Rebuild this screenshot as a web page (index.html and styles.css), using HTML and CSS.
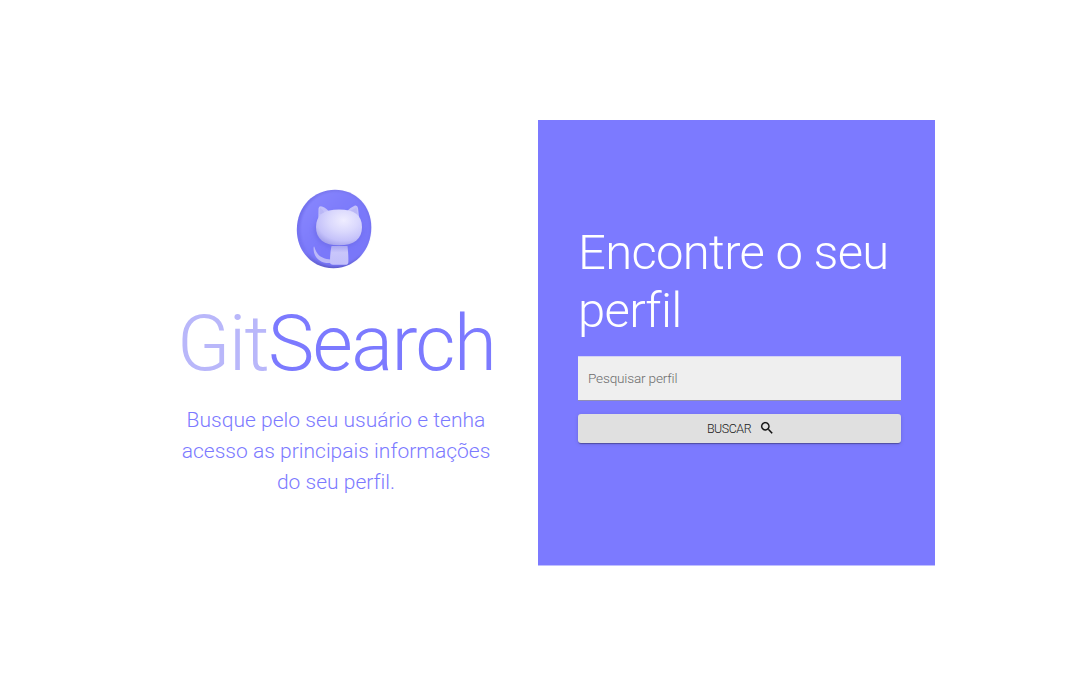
FILE: index.html
```html
<!DOCTYPE html>
<html lang="pt-BR">
<head>
<meta charset="utf-8">
<title>GitSearch</title>
<link rel="stylesheet" href="styles.css">
</head>
<body>
<main class="page">
  <section class="intro">
    <svg class="logo" width="76" height="80" viewBox="0 0 76 80" aria-hidden="true">
      <defs>
        <linearGradient id="disc" x1="0" y1="0" x2="1" y2="1">
          <stop offset="0" stop-color="#8a89ff"/><stop offset=".5" stop-color="#7b79fa"/><stop offset="1" stop-color="#7876f8"/>
        </linearGradient>
        <linearGradient id="rim" x1="0" y1="0" x2="0" y2="1">
          <stop offset="0" stop-color="#7a78ee"/><stop offset=".25" stop-color="#7270ee"/><stop offset=".8" stop-color="#7775f4"/><stop offset="1" stop-color="#5e5ccb"/>
        </linearGradient>
        <radialGradient id="head" cx=".6" cy=".3" r=".72">
          <stop offset="0" stop-color="#efedff"/><stop offset=".45" stop-color="#dad8fd"/><stop offset=".8" stop-color="#c5c2fa"/><stop offset="1" stop-color="#a8a5ee"/>
        </radialGradient>
        <linearGradient id="body" x1="0" y1="0" x2="0" y2="1">
          <stop offset="0" stop-color="#aaa7f2"/><stop offset=".35" stop-color="#c9c6fb"/><stop offset="1" stop-color="#c2bffa"/>
        </linearGradient>
        <filter id="soft" x="-30%" y="-30%" width="160%" height="160%"><feGaussianBlur stdDeviation="2"/></filter>
        <filter id="edge"><feGaussianBlur stdDeviation=".8"/></filter>
      </defs>
      <path d="M39 .8C60 .8 75.300 17 75.300 38.500C75.300 61 59 79.300 37.500 79.300C16 79.300 .8 62 .8 41C.8 17 18 .8 39 .8Z" fill="url(#rim)"/>
      <path d="M40 2.500C60 2.500 74 18 74 38.500C74 60 59 77 39 77C19 77 4.300 60 4.300 40C4.300 18 20 2.500 40 2.500Z" fill="url(#disc)" filter="url(#edge)"/>
      <ellipse cx="42" cy="41" rx="24" ry="18" fill="#6563df" opacity=".5" filter="url(#soft)"/>
      <path d="M18.300 57.800C20.500 65.500 25 70 35 70.500V74C24 75 17 68 17.600 58.500Q17.800 57 18.300 57.800Z" fill="#bcb9f8"/>
      <path d="M35.500 57H51.500Q52.600 66 52.300 73.500Q52.200 75.800 49 75.800H37Q34 75.800 34 73Q34 64 35.500 57Z" fill="url(#body)"/>
      <path d="M22.300 31L22.500 19.500Q23 16.500 26 17.500Q31 19 34 24ZM50 23Q54 18.500 59 16.500Q61.500 15.900 62 19L63.200 29Z" fill="#c3c0fa"/>
      <path d="M29 24.500Q27 20.500 24.200 18.700Q23.300 21 23.500 25ZM53 23.500Q57 20 60.500 18.500L61.300 25Z" fill="#aaa7ee" opacity=".35"/>
      <path d="M43 20.500C58 20.500 66 26 66 38C66 50 58 56.300 43 56.300C28 56.300 20 50 20 38C20 26 28 20.500 43 20.500Z" fill="url(#head)"/>
    </svg>
    <h1 class="brand"><span class="brand-light">Git</span>Search</h1>
    <p class="tagline">Busque pelo seu usuário e tenha acesso as principais informações do seu perfil.</p>
  </section>
  <section class="panel">
    <h2 class="heading">Encontre o seu perfil</h2>
    <input class="field" type="text" placeholder="Pesquisar perfil">
    <button class="submit" type="button">
      <span>BUSCAR</span>
      <svg class="search" viewBox="0 0 24 24" aria-hidden="true"><path d="M15.500 14h-.79l-.28-.27C15.410 12.590 16 11.110 16 9.500 16 5.910 13.090 3 9.500 3S3 5.910 3 9.500 5.910 16 9.500 16c1.610 0 3.090-.59 4.230-1.570l.27.28v.79l5 4.990L20.490 19l-4.990-5zm-6 0C7.010 14 5 11.990 5 9.500S7.010 5 9.500 5 14 7.010 14 9.500 11.990 14 9.500 14z"/></svg>
    </button>
  </section>
</main>
</body>
</html>
```
FILE: styles.css
```css
* { box-sizing: border-box; }
body {
  margin: 0;
  background: #fff;
  font-family: Roboto, "Liberation Sans", sans-serif;
  font-weight: 300;
}
.page {
  display: grid;
  grid-template-columns: 397px 397px;
  width: 794px;
  height: 446px;
  margin: 120px 0 0 141px;
}
.intro {
  display: flex;
  flex-direction: column;
  align-items: center;
  padding: 69px 43px 0 36px;
  color: #7c7aff;
}
.logo { flex: none; margin-right: 4px; }
.brand {
  margin: 29px 0 0;
  font-size: 78px;
  line-height: 91px;
  font-weight: 300;
  letter-spacing: -1.65px;
  white-space: nowrap;
}
.brand-light { color: #b9b7fa; }
.tagline {
  width: 318px;
  margin: 16px 0 0;
  font-size: 21px;
  line-height: 31.2px;
  letter-spacing: .02px;
  text-align: center;
}
.panel {
  display: flex;
  flex-direction: column;
  padding: 104px 34px 0 40px;
  background: #7c7aff;
  border-bottom: 1px solid #c0bfff;
}
.heading {
  margin: 0;
  color: #fff;
  font-size: 49px;
  line-height: 58px;
  font-weight: 300;
  letter-spacing: -.68px;
}
.field {
  width: 323px;
  height: 45px;
  margin: 16px 0 0;
  padding: 0 10px 2px;
  border: 0;
  border-top: 1px solid #d3d2f5;
  border-bottom: 1px solid #8f8db5;
  border-radius: 0;
  background: #efefef;
  font: 300 13.6px Roboto, sans-serif;
  letter-spacing: -.18px;
}
.field::placeholder { color: #6c6c6c; opacity: 1; }
.submit {
  display: flex;
  align-items: center;
  justify-content: center;
  gap: 8px;
  width: 323px;
  height: 29px;
  margin: 13px 0 0;
  padding: 0 0 1px 3px;
  border: 0;
  border-radius: 3px;
  background: #e0e0e0;
  box-shadow: 0 2px 1px -1px rgba(0, 0, 0, .2), 0 1px 1px rgba(0, 0, 0, .14), 0 1px 4px rgba(0, 0, 0, .12);
  color: #212121;
  font: 300 12.4px Roboto, sans-serif;
  letter-spacing: -.42px;
}
.search { width: 16px; height: 16px; fill: #111; stroke: #111; stroke-width: .2; }
```
